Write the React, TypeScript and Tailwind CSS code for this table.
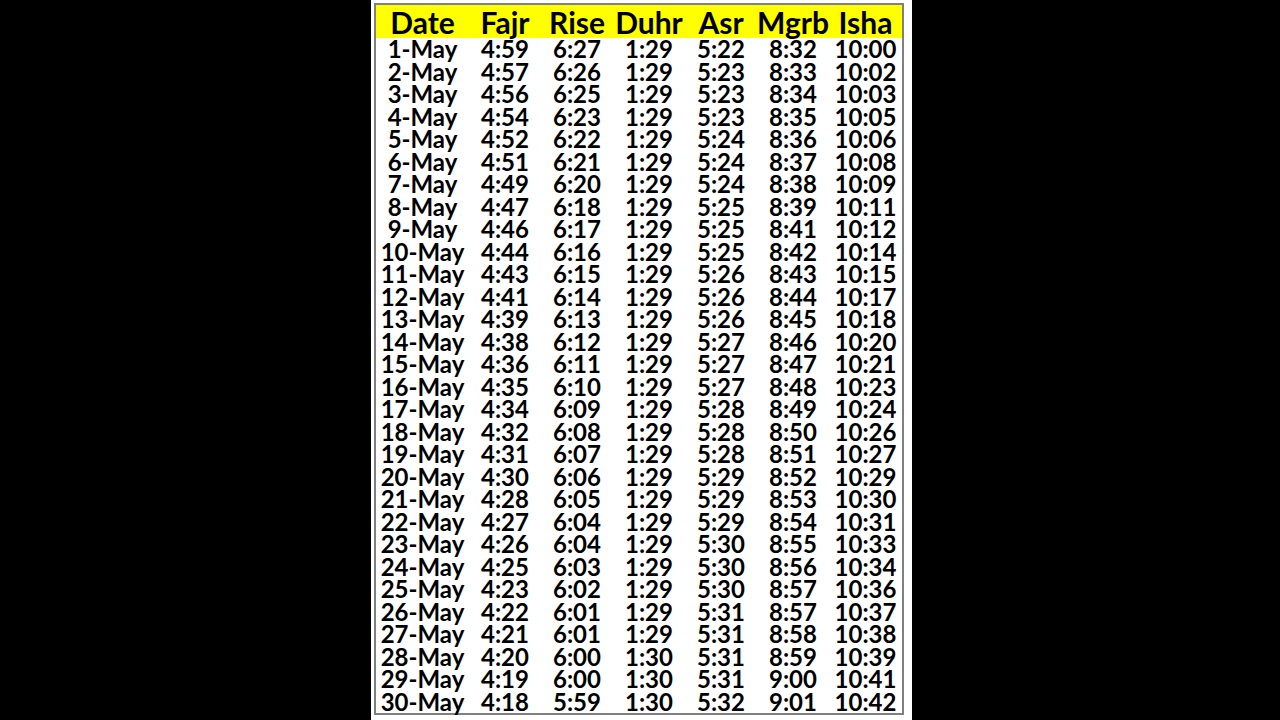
import React from "react";

const rows: string[][] = [
  ["1-May", "4:59", "6:27", "1:29", "5:22", "8:32", "10:00"],
  ["2-May", "4:57", "6:26", "1:29", "5:23", "8:33", "10:02"],
  ["3-May", "4:56", "6:25", "1:29", "5:23", "8:34", "10:03"],
  ["4-May", "4:54", "6:23", "1:29", "5:23", "8:35", "10:05"],
  ["5-May", "4:52", "6:22", "1:29", "5:24", "8:36", "10:06"],
  ["6-May", "4:51", "6:21", "1:29", "5:24", "8:37", "10:08"],
  ["7-May", "4:49", "6:20", "1:29", "5:24", "8:38", "10:09"],
  ["8-May", "4:47", "6:18", "1:29", "5:25", "8:39", "10:11"],
  ["9-May", "4:46", "6:17", "1:29", "5:25", "8:41", "10:12"],
  ["10-May", "4:44", "6:16", "1:29", "5:25", "8:42", "10:14"],
  ["11-May", "4:43", "6:15", "1:29", "5:26", "8:43", "10:15"],
  ["12-May", "4:41", "6:14", "1:29", "5:26", "8:44", "10:17"],
  ["13-May", "4:39", "6:13", "1:29", "5:26", "8:45", "10:18"],
  ["14-May", "4:38", "6:12", "1:29", "5:27", "8:46", "10:20"],
  ["15-May", "4:36", "6:11", "1:29", "5:27", "8:47", "10:21"],
  ["16-May", "4:35", "6:10", "1:29", "5:27", "8:48", "10:23"],
  ["17-May", "4:34", "6:09", "1:29", "5:28", "8:49", "10:24"],
  ["18-May", "4:32", "6:08", "1:29", "5:28", "8:50", "10:26"],
  ["19-May", "4:31", "6:07", "1:29", "5:28", "8:51", "10:27"],
  ["20-May", "4:30", "6:06", "1:29", "5:29", "8:52", "10:29"],
  ["21-May", "4:28", "6:05", "1:29", "5:29", "8:53", "10:30"],
  ["22-May", "4:27", "6:04", "1:29", "5:29", "8:54", "10:31"],
  ["23-May", "4:26", "6:04", "1:29", "5:30", "8:55", "10:33"],
  ["24-May", "4:25", "6:03", "1:29", "5:30", "8:56", "10:34"],
  ["25-May", "4:23", "6:02", "1:29", "5:30", "8:57", "10:36"],
  ["26-May", "4:22", "6:01", "1:29", "5:31", "8:57", "10:37"],
  ["27-May", "4:21", "6:01", "1:29", "5:31", "8:58", "10:38"],
  ["28-May", "4:20", "6:00", "1:30", "5:31", "8:59", "10:39"],
  ["29-May", "4:19", "6:00", "1:30", "5:31", "9:00", "10:41"],
  ["30-May", "4:18", "5:59", "1:30", "5:32", "9:01", "10:42"],
];

const headers = ["Date", "Fajr", "Rise", "Duhr", "Asr", "Mgrb", "Isha"];

const cols = "grid grid-cols-[93px_72px_72px_72px_72px_72px_73px]";

export default function App() {
  return (
    <div className="w-full h-[720px] bg-black overflow-hidden">
      <div
        className="ml-[371px] w-[541px] h-[720px] bg-white pl-[3px] pt-[3px]"
        style={{ fontFamily: "Lato, 'Open Sans', sans-serif" }}
      >
        <div className="w-[530px] border-2 border-[#808080] text-black font-bold">
          <div className={`${cols} h-[33px] bg-[#ffff00] items-center text-[30px] leading-[33px] pt-[1px]`}>
            {headers.map((h) => (
              <div key={h} className="text-center">
                {h}
              </div>
            ))}
          </div>
          {rows.map((r) => (
            <div key={r[0]} className={`${cols} h-[22.5px] items-center text-[24px] leading-[22.5px]`}>
              {r.map((c, i) => (
                <div key={i} className="text-center">
                  {c}
                </div>
              ))}
            </div>
          ))}
        </div>
      </div>
    </div>
  );
}
